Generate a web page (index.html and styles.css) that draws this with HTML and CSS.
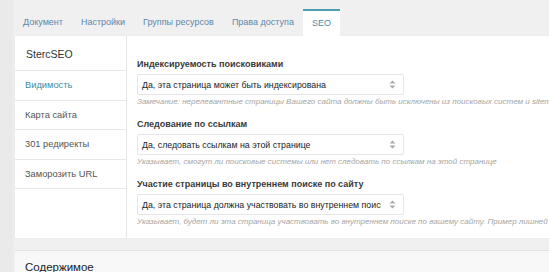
FILE: index.html
```html
<!DOCTYPE html>
<html lang="ru">
<head>
<meta charset="utf-8">
<title>SEO</title>
<link rel="stylesheet" href="styles.css">
</head>
<body>
<div class="page">
  <nav class="tabs">
    <span class="tab">Документ</span>
    <span class="tab">Настройки</span>
    <span class="tab">Группы ресурсов</span>
    <span class="tab">Права доступа</span>
    <span class="tab tab-active">SEO</span>
  </nav>
  <section class="panel">
    <aside class="sidebar">
      <div class="side-head">SterсSEO</div>
      <div class="side-item side-active">Видимость</div>
      <div class="side-item">Карта сайта</div>
      <div class="side-item">301 редиректы</div>
      <div class="side-item">Заморозить URL</div>
    </aside>
    <div class="main">
      <div class="field">
        <div class="label">Индексируемость поисковиками</div>
        <div class="select"><span class="select-text">Да, эта страница может быть индексирована</span><span class="arrows"><svg width="7" height="9" viewBox="0 0 7 9"><path d="M3.5 0.5 L6.5 3.5 H0.5 Z M3.5 8.5 L6.5 5.5 H0.5 Z" fill="#aaa"/></svg></span></div>
        <div class="hint">Замечание: нерелевантные страницы Вашего сайта должны быть исключены из поисковых систем и sitemap</div>
      </div>
      <div class="field">
        <div class="label">Следование по ссылкам</div>
        <div class="select"><span class="select-text">Да, следовать ссылкам на этой странице</span><span class="arrows"><svg width="7" height="9" viewBox="0 0 7 9"><path d="M3.5 0.5 L6.5 3.5 H0.5 Z M3.5 8.5 L6.5 5.5 H0.5 Z" fill="#aaa"/></svg></span></div>
        <div class="hint">Указывает, смогут ли поисковые системы или нет следовать по ссылкам на этой странице</div>
      </div>
      <div class="field">
        <div class="label">Участие страницы во внутреннем поиске по сайту</div>
        <div class="select"><span class="select-text">Да, эта страница должна участвовать во внутреннем поиске по сайту</span><span class="arrows"><svg width="7" height="9" viewBox="0 0 7 9"><path d="M3.5 0.5 L6.5 3.5 H0.5 Z M3.5 8.5 L6.5 5.5 H0.5 Z" fill="#aaa"/></svg></span></div>
        <div class="hint">Указывает, будет ли эта страница участвовать во внутреннем поиске по вашему сайту. Пример лишней страницы</div>
      </div>
    </div>
  </section>
  <section class="content-box">
    <h2 class="content-title">Содержимое</h2>
  </section>
</div>
</body>
</html>
```

FILE: styles.css
```css
html, body {
  margin: 0;
  padding: 0;
}
body {
  background: #f0f0f0;
  font-family: "Liberation Sans", Arial, sans-serif;
  color: #333;
  overflow: hidden;
  width: 549px;
  height: 272px;
}
.page {
  padding: 9px 0 0 14px;
  background: linear-gradient(to right, #eaeaea 0, #eaeaea 12px, #f0f0f0 15px);
  min-height: 263px;
}
.tabs {
  display: flex;
  height: 27px;
}
.tab {
  padding: 0 9px;
  font-size: 9px;
  line-height: 27px;
  color: #5b88ae;
  white-space: nowrap;
}
.tab-active {
  background: #fff;
  border-top: 2px solid #4e9db2;
  line-height: 25px;
  color: #4a8ea8;
}
.panel {
  margin-left: 1px;
  display: flex;
  background: #fff;
  height: 202px;
  width: 700px;
  box-shadow: 0 0 2px rgba(0, 0, 0, 0.05);
}
.sidebar {
  width: 111px;
  flex: none;
  border-right: 1px solid #e6e6e6;
}
.side-head {
  height: 35px;
  box-sizing: border-box;
  border-bottom: 1px solid #e8e8e8;
  padding: 12px 0 0 11px;
  font-size: 10.5px;
  color: #333;
}
.side-item {
  height: 29.5px;
  box-sizing: border-box;
  border-bottom: 1px solid #e8e8e8;
  padding-left: 10px;
  font-size: 9.3px;
  line-height: 29px;
  color: #555;
}
.side-active {
  color: #3d8c9c;
}
.main {
  padding: 22px 0 0 10px;
  flex: 1;
}
.field {
  margin-bottom: 9px;
}
.label {
  font-size: 9px;
  line-height: 12px;
  font-weight: bold;
  color: #3a3a3a;
}
.select {
  margin-top: 4px;
  width: 267px;
  height: 21px;
  box-sizing: border-box;
  border: 1px solid #e6e6e6;
  border-radius: 2px;
  display: flex;
  align-items: center;
  font-size: 8.8px;
  color: #222;
}
.select-text {
  flex: 1;
  padding-left: 4px;
  white-space: nowrap;
  overflow: hidden;
}
.arrows {
  width: 22px;
  flex: none;
  height: 100%;
  display: flex;
  align-items: center;
  justify-content: center;
}
.hint {
  font-size: 8px;
  line-height: 14px;
  font-style: italic;
  color: #a5a5a5;
  white-space: nowrap;
}
.content-box {
  margin: 12px 0 0 1px;
  width: 700px;
  height: 40px;
  background: #f8f8f8;
  border-top: 1px solid #e2e2e2;
}
.content-title {
  margin: 0;
  padding: 10px 0 0 10px;
  font-size: 11.5px;
  font-weight: normal;
  color: #222;
}
```
